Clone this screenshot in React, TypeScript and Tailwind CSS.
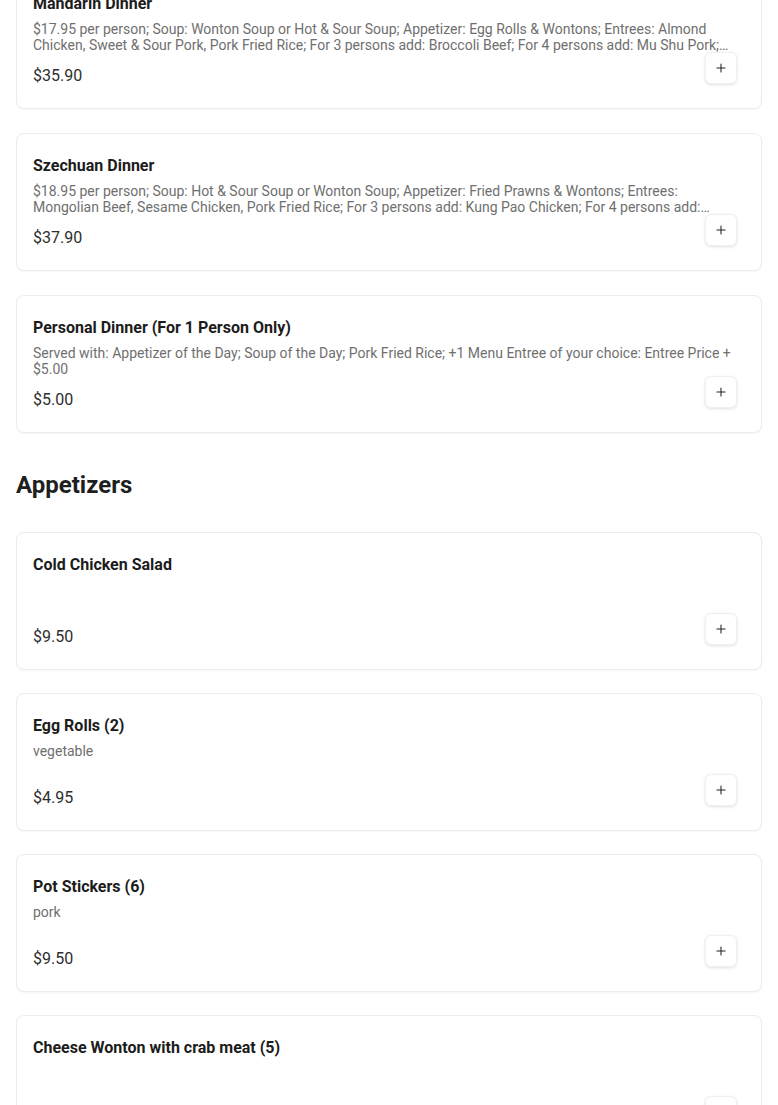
import { Plus } from 'lucide-react';

interface MenuItem {
    name: string;
    description?: string;
    price: string;
}

const dinners: MenuItem[] = [
    {
        name: 'Mandarin Dinner',
        description:
            '$17.95 per person; Soup: Wonton Soup or Hot & Sour Soup; Appetizer: Egg Rolls & Wontons; Entrees: Almond Chicken, Sweet & Sour Pork, Pork Fried Rice; For 3 persons add: Broccoli Beef; For 4 persons add: Mu Shu Pork; For 5 persons add: Kung Pao Shrimp',
        price: '$35.90',
    },
    {
        name: 'Szechuan Dinner',
        description:
            '$18.95 per person; Soup: Hot & Sour Soup or Wonton Soup; Appetizer: Fried Prawns & Wontons; Entrees: Mongolian Beef, Sesame Chicken, Pork Fried Rice; For 3 persons add: Kung Pao Chicken; For 4 persons add: Szechuan Prawns',
        price: '$37.90',
    },
    {
        name: 'Personal Dinner (For 1 Person Only)',
        description:
            'Served with: Appetizer of the Day; Soup of the Day; Pork Fried Rice; +1 Menu Entree of your choice: Entree Price + $5.00',
        price: '$5.00',
    },
];

const appetizers: MenuItem[] = [
    { name: 'Cold Chicken Salad', price: '$9.50' },
    { name: 'Egg Rolls (2)', description: 'vegetable', price: '$4.95' },
    { name: 'Pot Stickers (6)', description: 'pork', price: '$9.50' },
    { name: 'Cheese Wonton with crab meat (5)', price: '$7.95' },
];

function ItemCard({ item }: { item: MenuItem }) {
    return (
        <div className="relative rounded-lg border border-[#ececec] bg-white px-4 pt-5 pb-5 shadow-[0_1px_2px_rgba(0,0,0,0.04)]">
            <h3 className="text-[16px] font-bold leading-6 text-[#1c1c1c]">{item.name}</h3>
            <p className="mt-[5px] h-8 pr-2 text-[14px] leading-4 text-[#6f6f6f] line-clamp-2">
                {item.description ?? ''}
            </p>
            <div className="mt-[11px] text-[16px] leading-6 text-[#2e2e2e]">{item.price}</div>
            <button className="absolute right-6 bottom-6 flex h-8 w-8 items-center justify-center rounded-md border border-[#f0f0f0] bg-white shadow-[0_1px_3px_rgba(0,0,0,0.12)]">
                <Plus size={14} strokeWidth={1.8} className="text-[#222]" />
            </button>
        </div>
    );
}

export default function App() {
    return (
        <div className="min-h-screen overflow-hidden bg-white px-4 font-['Roboto',sans-serif]">
            <div className="-mt-[29px] flex flex-col gap-6">
                {dinners.map((item) => (
                    <ItemCard key={item.name} item={item} />
                ))}
            </div>

            <h2 className="mt-[36px] mb-[31px] text-[24px] font-bold leading-8 text-[#1f1f1f]">
                Appetizers
            </h2>

            <div className="flex flex-col gap-[23px] pb-10">
                {appetizers.map((item) => (
                    <ItemCard key={item.name} item={item} />
                ))}
            </div>
        </div>
    );
}
